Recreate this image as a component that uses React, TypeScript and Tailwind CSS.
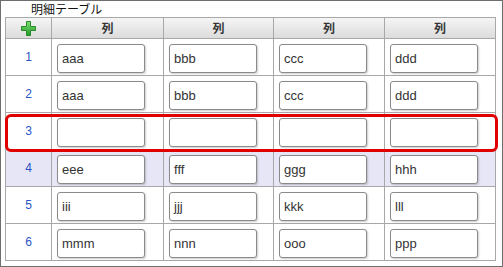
const COLS = ['列', '列', '列', '列'];

const ROWS: string[][] = [
  ['aaa', 'bbb', 'ccc', 'ddd'],
  ['aaa', 'bbb', 'ccc', 'ddd'],
  ['', '', '', ''],
  ['eee', 'fff', 'ggg', 'hhh'],
  ['iii', 'jjj', 'kkk', 'lll'],
  ['mmm', 'nnn', 'ooo', 'ppp'],
];

function PlusIcon() {
  return (
    <svg width="15" height="15" viewBox="0 0 15 15">
      <defs>
        <linearGradient id="pg" x1="0" y1="0" x2="0" y2="1">
          <stop offset="0" stopColor="#7fe07a" />
          <stop offset="1" stopColor="#1f9a22" />
        </linearGradient>
      </defs>
      <path
        d="M5.5 0.5h4v5h5v4h-5v5h-4v-5h-5v-4h5z"
        fill="url(#pg)"
        stroke="#2a8a2a"
        strokeWidth="1"
      />
    </svg>
  );
}

export default function App() {
  return (
    <div
      className="relative h-[267px] w-[503px] border border-[#6e6e6e] bg-white"
      style={{ fontFamily: '"Liberation Sans", Arial, "Noto Sans CJK JP", sans-serif' }}
    >
      <div className="h-[16px] pl-[30px] pt-[1px] text-[12px] leading-[14px] text-[#111]" style={{ fontFamily: '"Noto Sans CJK JP", sans-serif' }}>
        明細テーブル
      </div>

      <div className="ml-[4px] grid w-[491px] grid-cols-[46px_112px_110px_111px_111px] border-l border-t border-[#a8a8a8]">
        {/* header */}
        <div className="flex h-[21px] items-center justify-center border-b border-r border-[#a8a8a8] bg-gradient-to-b from-[#f5f5f5] to-[#dcdcdc]">
          <PlusIcon />
        </div>
        {COLS.map((c, i) => (
          <div
            key={i}
            className="flex h-[21px] items-center justify-center border-b border-r border-[#a8a8a8] bg-gradient-to-b from-[#f5f5f5] to-[#dcdcdc] text-[12px] font-bold text-[#333]"
            style={{ fontFamily: '"Noto Sans CJK JP", sans-serif' }}
          >
            {c}
          </div>
        ))}

        {ROWS.map((row, r) => {
          const bg = r === 3 ? 'bg-[#e6e6f7]' : 'bg-white';
          return [
            <div
              key={`n${r}`}
              className={`flex h-[37px] items-center justify-center border-b border-r border-[#a8a8a8] text-[12px] text-[#2a55c8] ${bg}`}
            >
              {r + 1}
            </div>,
            ...row.map((v, c) => (
              <div key={`${r}-${c}`} className={`h-[37px] border-b border-r border-[#a8a8a8] pl-[5px] pt-[5px] ${bg}`}>
                <div className="flex h-[29px] w-[88px] items-center rounded-[3px] border border-[#8a8a8a] bg-white pl-[4px] text-[13px] text-[#333] shadow-[1px_1px_2px_rgba(0,0,0,0.2)]">
                  {v}
                </div>
              </div>
            )),
          ];
        })}
      </div>

      {/* highlight on row 3 */}
      <div className="absolute left-[4px] top-[113px] h-[38px] w-[493px] rounded-[6px] border-[3px] border-[#e00000]" />
    </div>
  );
}
